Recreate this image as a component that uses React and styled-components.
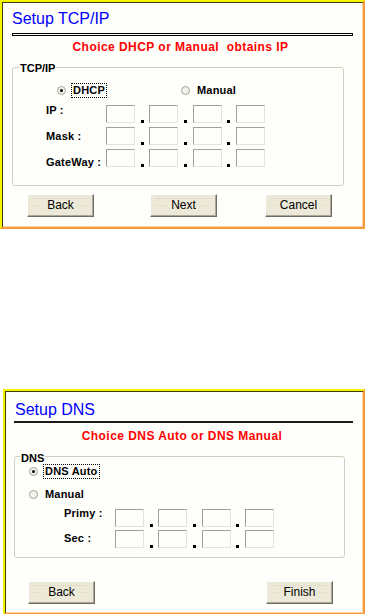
import React from 'react';
import styled, { createGlobalStyle } from 'styled-components';

const Global = createGlobalStyle`
  html, body { margin: 0; padding: 0; background: #ffffff; }
  body { width: 366px; height: 614px; overflow: hidden; font-family: "Liberation Sans", Arial, sans-serif; }
`;

const Page = styled.div`
  display: flex;
  flex-direction: column;
  width: 366px;
`;

const Panel = styled.section`
  box-sizing: border-box;
  display: flex;
  flex-direction: column;
  width: ${(p) => p.$w}px;
  margin: ${(p) => p.$top}px 0 0 ${(p) => p.$x}px;
  padding-bottom: ${(p) => p.$pb}px;
  background: #fefefb;
  border-style: solid;
  border-width: 2px;
  border-color: #f4f400 #f79a3a #f79a3a #f4f400;
  box-shadow: inset 1px 1px 0 #3c3c10, inset -1px -1px 0 #fbd2a4;
`;

const Title = styled.h1`
  margin: ${(p) => p.$mt}px 0 0 10px;
  font: 16px/18px "Liberation Sans", Arial, sans-serif;
  color: #0000ff;
`;

const HollowRule = styled.div`
  box-sizing: border-box;
  margin: 5px 0 0 10px;
  width: 341px;
  height: 3px;
  border: 1px solid #000;
  background: #fff;
`;

const SolidRule = styled.div`
  margin: 2px 0 0 9px;
  width: 339px;
  height: 2px;
  background: #1a1a1a;
`;

const Subtitle = styled.p`
  margin: ${(p) => p.$mt}px 0 0 0;
  padding-right: ${(p) => p.$pr}px;
  font: bold 12px/14px "Liberation Sans", Arial, sans-serif;
  letter-spacing: 0.45px;
  color: #ff0000;
  text-align: center;
  white-space: pre;
`;

const Group = styled.fieldset`
  box-sizing: border-box;
  margin: ${(p) => p.$mt}px 0 0 ${(p) => p.$ml}px;
  width: ${(p) => p.$w}px;
  padding: 0 0 ${(p) => p.$pb}px 0;
  border: 1px solid #cfcfbf;
  border-radius: 3px;
  display: flex;
  flex-direction: column;
`;

const Legend = styled.legend`
  margin-left: ${(p) => p.$ml}px;
  padding: 3px 1px 0 1px;
  font: bold 11px/11px "Liberation Sans", Arial, sans-serif;
  color: #000;
`;

const RadioRow = styled.div`
  display: flex;
  align-items: center;
  height: 15px;
  margin-top: ${(p) => p.$mt}px;
`;

const RadioOption = styled.label`
  display: flex;
  align-items: center;
  margin-left: ${(p) => p.$ml}px;
  gap: 5px;
`;

const RadioCircle = styled.span`
  box-sizing: border-box;
  width: 9px;
  height: 9px;
  border-radius: 50%;
  border: 1px solid #a4a49a;
  background: #f2f2ea;
  display: inline-flex;
  align-items: center;
  justify-content: center;
  &::after {
    content: '';
    width: 3px;
    height: 3px;
    border-radius: 50%;
    background: ${(p) => (p.$checked ? '#000' : 'transparent')};
  }
`;

const RadioText = styled.span`
  box-sizing: border-box;
  height: 15px;
  padding: 0 1px;
  display: inline-flex;
  align-items: center;
  border: 1px dotted ${(p) => (p.$focus ? '#000' : 'transparent')};
  font: bold 11px/13px "Liberation Sans", Arial, sans-serif;
  letter-spacing: 0.2px;
  color: #000;
`;

const AddrBlock = styled.div`
  display: flex;
  margin: ${(p) => p.$mt}px 0 0 ${(p) => p.$ml}px;
`;

const LabelCol = styled.div`
  display: flex;
  flex-direction: column;
  gap: ${(p) => p.$gap}px;
  width: ${(p) => p.$w}px;
  margin-top: ${(p) => p.$mt}px;
`;

const FieldLabel = styled.span`
  font: bold 11px/13px "Liberation Sans", Arial, sans-serif;
  letter-spacing: 0.2px;
  color: #000;
  white-space: pre;
`;

const BoxCol = styled.div`
  display: flex;
  flex-direction: column;
  gap: ${(p) => p.$gap}px;
`;

const AddrRow = styled.div`
  display: flex;
  align-items: flex-end;
  height: 18px;
`;

const Octet = styled.span`
  box-sizing: border-box;
  width: 29px;
  height: 18px;
  border: 1px solid;
  border-color: #a3a195 #e6e4da #e6e4da #a3a195;
  background: #fefefb;
`;

const Sep = styled.span`
  width: 14.33px;
  height: 18px;
  display: flex;
  align-items: flex-end;
  justify-content: center;
  &::after {
    content: '';
    width: 3px;
    height: 3px;
    background: #000;
  }
`;

const ButtonRow = styled.div`
  display: flex;
  margin-top: ${(p) => p.$mt}px;
`;

const Button = styled.button`
  position: relative;
  box-sizing: border-box;
  width: 67px;
  height: 23px;
  margin-left: ${(p) => p.$ml}px;
  padding: 0;
  display: flex;
  align-items: center;
  justify-content: center;
  font: 12px/14px "Liberation Sans Narrow", "Liberation Sans", Arial, sans-serif;
  color: #000;
  background-color: #ece9d8;
  background-image: repeating-linear-gradient(90deg, #d6d2c2 0 1px, transparent 1px 3px);
  background-size: calc(100% - 8px) 1px;
  background-position: center center;
  background-repeat: no-repeat;
  border: 1px solid;
  border-color: #ffffff #6f6d62 #6f6d62 #ffffff;
  box-shadow: inset -1px -1px 0 #aca899;
  &::before {
    content: '';
    position: absolute;
    top: 3px;
    left: 4px;
    right: 4px;
    border-top: 1px dotted #d6d2c2;
  }
`;

const ButtonText = styled.span`
  padding: 0 3px;
  background: #ece9d8;
`;

function Addr() {
  return (
    <AddrRow>
      <Octet />
      <Sep />
      <Octet />
      <Sep />
      <Octet />
      <Sep />
      <Octet />
    </AddrRow>
  );
}

export default function App() {
  return (
    <Page>
      <Global />
      <Panel $w={365} $x={0} $top={0} $pb={10}>
        <Title $mt={8}>Setup TCP/IP</Title>
        <HollowRule />
        <Subtitle $mt={4} $pr={4}>{'Choice DHCP or Manual  obtains IP'}</Subtitle>
        <Group $mt={6} $ml={10} $w={332} $pb={16}>
          <Legend $ml={6}>TCP/IP</Legend>
          <RadioRow $mt={9}>
            <RadioOption $ml={44}>
              <RadioCircle $checked />
              <RadioText $focus>DHCP</RadioText>
            </RadioOption>
            <RadioOption $ml={74}>
              <RadioCircle />
              <RadioText>Manual</RadioText>
            </RadioOption>
          </RadioRow>
          <AddrBlock $mt={7} $ml={33}>
            <LabelCol $w={60} $gap={12.8} $mt={-1}>
              <FieldLabel>IP :</FieldLabel>
              <FieldLabel>Mask :</FieldLabel>
              <FieldLabel>GateWay :</FieldLabel>
            </LabelCol>
            <BoxCol $gap={4}>
              <Addr />
              <Addr />
              <Addr />
            </BoxCol>
          </AddrBlock>
        </Group>
        <ButtonRow $mt={8}>
          <Button $ml={25}><ButtonText>Back</ButtonText></Button>
          <Button $ml={56}><ButtonText>Next</ButtonText></Button>
          <Button $ml={48}><ButtonText>Cancel</ButtonText></Button>
        </ButtonRow>
      </Panel>

      <Panel $w={362} $x={3} $top={160} $pb={9}>
        <Title $mt={10}>Setup DNS</Title>
        <SolidRule />
        <Subtitle $mt={6} $pr={4}>Choice DNS Auto or DNS Manual</Subtitle>
        <Group $mt={7} $ml={9} $w={331} $pb={9}>
          <Legend $ml={5}>DNS</Legend>
          <RadioRow $mt={0}>
            <RadioOption $ml={14}>
              <RadioCircle $checked />
              <RadioText $focus>DNS Auto</RadioText>
            </RadioOption>
          </RadioRow>
          <RadioRow $mt={8}>
            <RadioOption $ml={14}>
              <RadioCircle />
              <RadioText>Manual</RadioText>
            </RadioOption>
          </RadioRow>
          <AddrBlock $mt={7} $ml={49}>
            <LabelCol $w={51} $gap={12} $mt={-2}>
              <FieldLabel>Primy :</FieldLabel>
              <FieldLabel>Sec :</FieldLabel>
            </LabelCol>
            <BoxCol $gap={3}>
              <Addr />
              <Addr />
            </BoxCol>
          </AddrBlock>
        </Group>
        <ButtonRow $mt={23}>
          <Button $ml={23}><ButtonText>Back</ButtonText></Button>
          <Button $ml={171}><ButtonText>Finish</ButtonText></Button>
        </ButtonRow>
      </Panel>
    </Page>
  );
}
